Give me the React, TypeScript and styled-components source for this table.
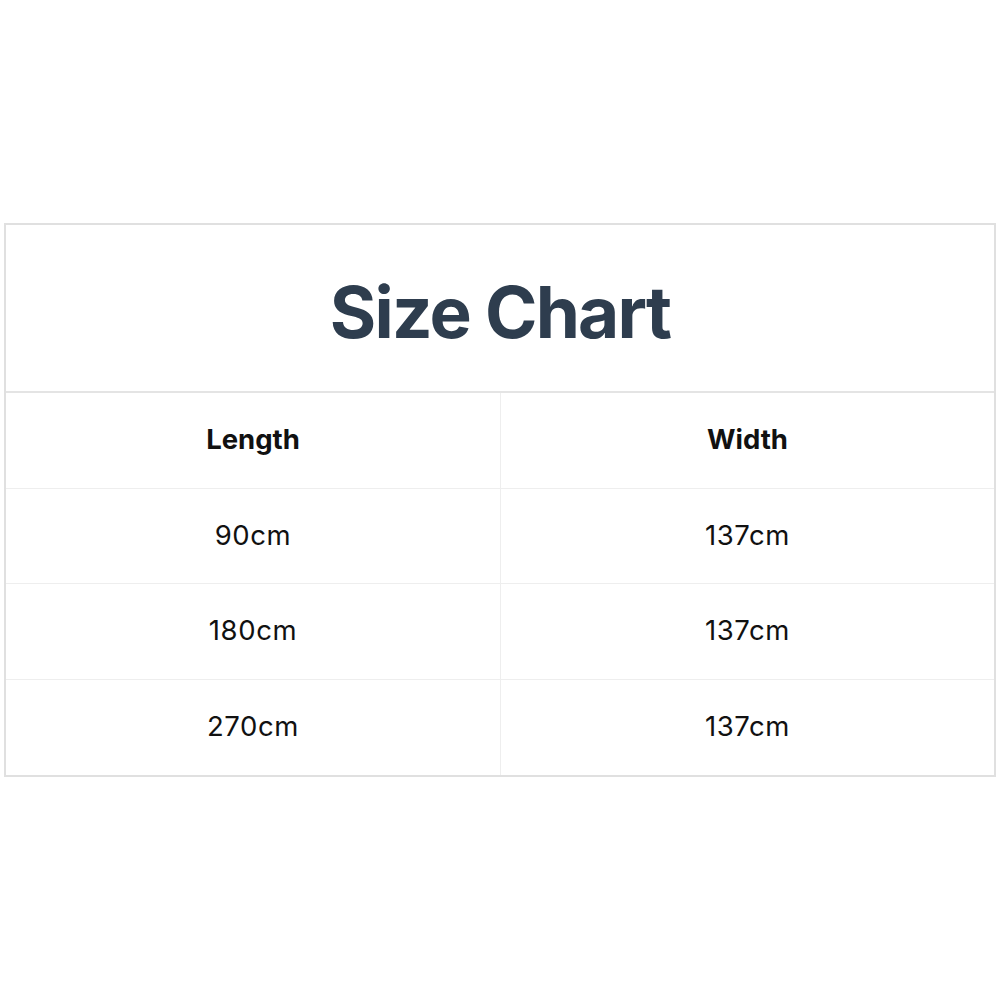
import React from "react";
import { styled, createGlobalStyle } from "styled-components";

const rows = [
  ["90cm", "137cm"],
  ["180cm", "137cm"],
  ["270cm", "137cm"],
];

const App = () => {
  return (
    <Page>
      <GlobalStyle />
      <Chart>
        <Title>Size Chart</Title>
        <Grid>
          <Cell $head>Length</Cell>
          <Cell $head $right>Width</Cell>
          {rows.map(([len, wid], i) => (
            <React.Fragment key={i}>
              <Cell>{len}</Cell>
              <Cell $right>{wid}</Cell>
            </React.Fragment>
          ))}
        </Grid>
      </Chart>
    </Page>
  );
};

const GlobalStyle = createGlobalStyle`
  body {
    margin: 0;
    background: #fff;
    font-family: Inter, "Open Sans", sans-serif;
  }
`;

const Page = styled.div`
  width: 1000px;
  height: 1000px;
  box-sizing: border-box;
  padding: 223px 4px 0 4px;
`;

const Chart = styled.div`
  width: 992px;
  box-sizing: border-box;
  border: 2px solid #e0e0e0;
  background: #fff;
`;

const Title = styled.div`
  height: 168px;
  display: flex;
  align-items: center;
  justify-content: center;
  padding-top: 8px;
  box-sizing: border-box;
  font-size: 71px;
  font-weight: 700;
  color: #2e3d4e;
  letter-spacing: -1.8px;
  border-bottom: 2px solid #e4e4e4;
`;

const Grid = styled.div`
  display: grid;
  grid-template-columns: 1fr 1fr;
  grid-auto-rows: 95.5px;
`;

const Cell = styled.div<{ $head?: boolean; $right?: boolean }>`
  display: flex;
  align-items: center;
  justify-content: center;
  padding-bottom: 2px;
  font-size: 27.5px;
  font-weight: ${(p) => (p.$head ? 700 : 400)};
  letter-spacing: ${(p) => (p.$head ? "0" : "0.6px")};
  color: #111;
  border-left: ${(p) => (p.$right ? "1px solid #eeeeee" : "none")};
  border-bottom: 1px solid #eeeeee;
  &:nth-last-child(-n + 2) {
    border-bottom: none;
  }
`;

export default App;
